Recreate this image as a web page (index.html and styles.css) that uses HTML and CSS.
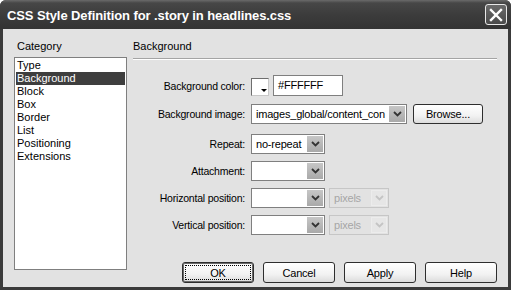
FILE: index.html
```html
<!DOCTYPE html>
<html lang="en">
<head>
    <meta charset="UTF-8">
    <title>CSS Style Definition</title>
    <link rel="stylesheet" href="styles.css">
</head>
<body>
    <div class="window">
        <div class="titlebar">
            <span class="title">CSS Style Definition for .story in headlines.css</span>
            <span class="close">
                <svg width="14" height="14" viewBox="0 0 14 14">
                    <path d="M2 2 L12 12 M12 2 L2 12" stroke="#fff" stroke-width="2.4" stroke-linecap="square"/>
                </svg>
            </span>
        </div>

        <div class="frame">
            <div class="category">
                <div class="caption">Category</div>
                <ul class="list">
                    <li>Type</li>
                    <li class="selected">Background</li>
                    <li>Block</li>
                    <li>Box</li>
                    <li>Border</li>
                    <li>List</li>
                    <li>Positioning</li>
                    <li>Extensions</li>
                </ul>
            </div>

            <div class="panel">
                <div class="heading">Background</div>

                <div class="form">
                    <div class="row row-color">
                        <span class="label">Background color:</span>
                        <span class="swatch">
                            <svg width="6" height="4" viewBox="0 0 6 4"><path d="M0 0 H6 L3 3 Z" fill="#000"/></svg>
                        </span>
                        <span class="textbox">#FFFFFF</span>
                    </div>
                    <div class="row row-image">
                        <span class="label">Background image:</span>
                        <div class="select wide">
                            <span class="value">images_global/content_con</span>
                            <span class="arrow"><svg width="9" height="6" viewBox="0 0 9 6"><path d="M1 1 L4.5 4.5 L8 1" fill="none" stroke="#333" stroke-width="1.8"/></svg></span>
                        </div>
                        <span class="btn browse">Browse...</span>
                    </div>
                    <div class="row">
                        <span class="label">Repeat:</span>
                        <div class="select">
                            <span class="value">no-repeat</span>
                            <span class="arrow"><svg width="9" height="6" viewBox="0 0 9 6"><path d="M1 1 L4.5 4.5 L8 1" fill="none" stroke="#333" stroke-width="1.8"/></svg></span>
                        </div>
                    </div>
                    <div class="row">
                        <span class="label">Attachment:</span>
                        <div class="select">
                            <span class="value"></span>
                            <span class="arrow"><svg width="9" height="6" viewBox="0 0 9 6"><path d="M1 1 L4.5 4.5 L8 1" fill="none" stroke="#333" stroke-width="1.8"/></svg></span>
                        </div>
                    </div>
                    <div class="row">
                        <span class="label">Horizontal position:</span>
                        <div class="select">
                            <span class="value"></span>
                            <span class="arrow"><svg width="9" height="6" viewBox="0 0 9 6"><path d="M1 1 L4.5 4.5 L8 1" fill="none" stroke="#333" stroke-width="1.8"/></svg></span>
                        </div>
                        <div class="select unit disabled">
                            <span class="value">pixels</span>
                            <span class="arrow"><svg width="9" height="6" viewBox="0 0 9 6"><path d="M1 1 L4.5 4.5 L8 1" fill="none" stroke="#c4c4c4" stroke-width="1.8"/></svg></span>
                        </div>
                    </div>
                    <div class="row">
                        <span class="label">Vertical position:</span>
                        <div class="select">
                            <span class="value"></span>
                            <span class="arrow"><svg width="9" height="6" viewBox="0 0 9 6"><path d="M1 1 L4.5 4.5 L8 1" fill="none" stroke="#333" stroke-width="1.8"/></svg></span>
                        </div>
                        <div class="select unit disabled">
                            <span class="value">pixels</span>
                            <span class="arrow"><svg width="9" height="6" viewBox="0 0 9 6"><path d="M1 1 L4.5 4.5 L8 1" fill="none" stroke="#c4c4c4" stroke-width="1.8"/></svg></span>
                        </div>
                    </div>
                </div>

                <div class="buttons">
                    <span class="btn default">OK</span>
                    <span class="btn">Cancel</span>
                    <span class="btn">Apply</span>
                    <span class="btn">Help</span>
                </div>
            </div>
        </div>
    </div>
</body>
</html>
```

FILE: styles.css
```css
* {
    margin: 0;
    padding: 0;
    box-sizing: border-box;
}

body {
    font-family: "Liberation Sans", Arial, sans-serif;
    font-size: 10.5px;
    letter-spacing: -0.2px;
    color: #000;
    background: #fff;
}

.window {
    width: 511px;
    height: 290px;
    display: flex;
    flex-direction: column;
    background: #3a3a3a;
    border-radius: 6px 6px 0 0;
    overflow: hidden;
}

.titlebar {
    height: 29px;
    flex-shrink: 0;
    display: flex;
    align-items: center;
    justify-content: space-between;
    padding: 0 4px 0 7px;
    background: linear-gradient(#6a6a6a 0, #474747 3px, #3c3c3c 50%, #333 100%);
}

.title {
    color: #fff;
    font-weight: bold;
    font-size: 13px;
    letter-spacing: -0.1px;
    margin-top: 1px;
}

.close {
    width: 22px;
    height: 21px;
    display: flex;
    align-items: center;
    justify-content: center;
    border: 1px solid #e8e8e8;
    border-radius: 3px;
    background: linear-gradient(#6a6a6a, #4a4a4a);
}

.frame {
    flex: 1;
    display: flex;
    margin: 0 3px 3px;
    padding: 11px 11px 4px;
    background: #e2e2e2;
}

.category {
    width: 113px;
    margin-right: 6px;
}

.caption {
    font-size: 11px;
    letter-spacing: 0;
    line-height: 13px;
    padding-left: 3px;
    margin-bottom: 4px;
}

.list {
    list-style: none;
    height: 213px;
    border: 1px solid #7f7f7f;
    background: #fff;
    padding: 1px;
    font-size: 11px;
    letter-spacing: 0;
}

.list li {
    line-height: 13px;
    padding-left: 1px;
}

.list li.selected {
    background: #3e3e3e;
    color: #fff;
}

.panel {
    flex: 1;
    display: flex;
    flex-direction: column;
}

.heading {
    font-size: 11px;
    letter-spacing: 0;
    line-height: 13px;
    padding-bottom: 5px;
    border-bottom: 1px solid #a4a4a4;
    box-shadow: 0 1px 0 #fff;
}

.form {
    display: flex;
    flex-direction: column;
    gap: 7px;
    margin-top: 16px;
}

.row {
    display: flex;
    align-items: center;
    height: 20px;
}

.row-color {
    height: 21px;
    margin-bottom: 1px;
}

.row-image {
    margin-bottom: 3px;
}

.label {
    width: 112px;
    margin-right: 6px;
    text-align: right;
    white-space: nowrap;
}

.swatch {
    width: 18px;
    height: 18px;
    margin-top: 2px;
    border: 1px solid #6e6e6e;
    border-right-color: #c8c8c8;
    border-bottom-color: #c8c8c8;
    background: #fff;
    display: flex;
    align-items: flex-end;
    justify-content: flex-end;
    padding: 0 1px 2px 0;
}

.textbox {
    width: 70px;
    height: 21px;
    margin-left: 4px;
    border: 1px solid #7f7f7f;
    background: #fff;
    padding-left: 4px;
    line-height: 19px;
    font-size: 11px;
}

.select {
    width: 74px;
    height: 20px;
    display: flex;
    border: 1px solid #7f7f7f;
    background: #fff;
}

.select.wide {
    width: 156px;
}

.select.unit {
    width: 60px;
    margin-left: 4px;
}

.select .value {
    flex: 1;
    overflow: hidden;
    white-space: nowrap;
    padding-left: 4px;
    line-height: 18px;
    font-size: 11px;
}

.select .arrow {
    width: 16px;
    margin: 1px;
    display: flex;
    align-items: center;
    justify-content: center;
    background: linear-gradient(#c6c6c6, #a9a9a9);
}

.select.disabled {
    border-color: #c6c6c6;
    background: #e2e2e2;
    color: #a6a6a6;
}

.select.disabled .arrow {
    background: #e6e6e6;
    border: 1px solid #ececec;
}

.btn {
    width: 72px;
    height: 21px;
    display: flex;
    align-items: center;
    justify-content: center;
    border: 1px solid #2e2e2e;
    border-radius: 3px;
    background: linear-gradient(#fff, #f2f2f2 60%, #dcdcdc);
    font-size: 11px;
}

.btn.browse {
    width: 70px;
    height: 20px;
    margin-left: 6px;
}

.btn.default {
    box-shadow: inset 0 0 0 1px #6a6a6a;
    outline: 1px dotted #000;
    outline-offset: -4px;
}

.buttons {
    margin-top: auto;
    display: flex;
    justify-content: flex-end;
    gap: 9px;
}
```
